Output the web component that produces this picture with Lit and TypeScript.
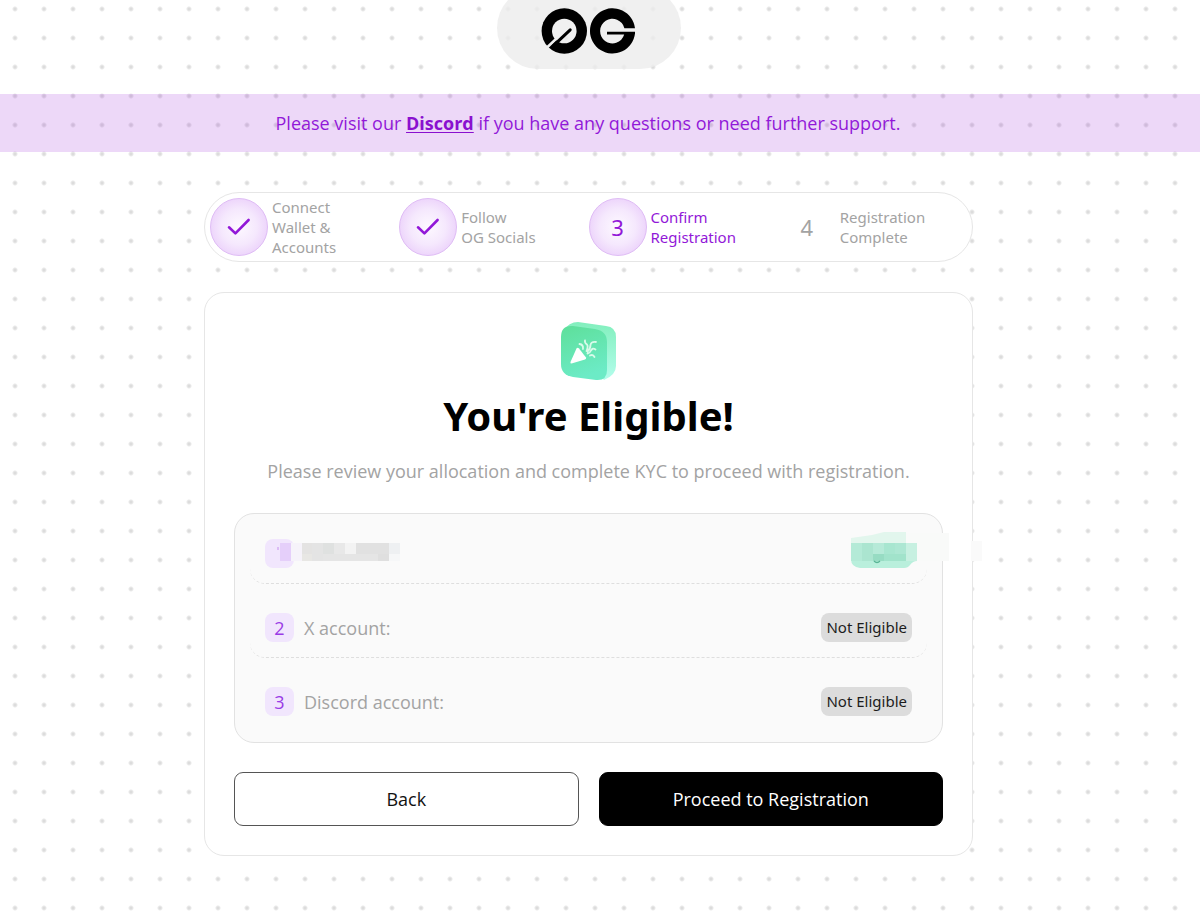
import { LitElement, html, css, svg, nothing } from "lit";
import { customElement, property } from "lit/decorators.js";

interface Step {
  lines: string[];
  state: "done" | "current" | "todo";
}

const STEPS: Step[] = [
  { lines: ["Connect", "Wallet &", "Accounts"], state: "done" },
  { lines: ["Follow", "OG Socials"], state: "done" },
  { lines: ["Confirm", "Registration"], state: "current" },
  { lines: ["Registration", "Complete"], state: "todo" },
];

@customElement("brand-logo")
export class BrandLogo extends LitElement {
  static styles = css`
    :host { display: block; }
    .mark { display: block; width: 96px; height: 46px; }
  `;

  render() {
    return html`
      <svg class="mark" viewBox="1 0 96 46" role="img" aria-label="0G">
        <defs>
          <mask id="zero">
            <rect width="97" height="46" fill="#fff" />
            <circle cx="24.3" cy="23" r="12.3" fill="#000" />
            <path d="M16 31 L3 43.3" stroke="#000" stroke-width="2.6" />
          </mask>
        </defs>
        <circle cx="24.3" cy="23" r="22.7" mask="url(#zero)" />
        <path d="M13.2 37.9 L30.2 21.8" stroke="#000" stroke-width="3" stroke-linecap="round" />
        <path d="M95 20.3 A22.6 22.6 0 1 0 95 25.5 V23.8 H67 V26.6 H84.2 A12.3 12.3 0 1 1 84.4 20.3 Z" />
      </svg>
    `;
  }
}

@customElement("step-track")
export class StepTrack extends LitElement {
  @property({ attribute: false }) steps: Step[] = [];

  static styles = css`
    :host { display: block; }
    .track {
      display: grid;
      grid-template-columns: repeat(4, 1fr);
      box-sizing: border-box;
      min-height: 70px;
      margin: 0;
      padding: 4px 5px;
      list-style: none;
      background: #fff;
      border: 1px solid #e6e6e6;
      border-radius: 35px;
    }
    .step { display: flex; align-items: center; gap: 4px; color: #a3a3a3; }
    .current { color: #9218d8; }
    .disc {
      display: grid;
      place-items: center;
      flex: none;
      box-sizing: border-box;
      width: 58px;
      height: 58px;
      border-radius: 50%;
      font-size: 22px;
    }
    .filled {
      color: #9218d8;
      border: 1px solid #dfbcf5;
      background: radial-gradient(circle, #fdf9ff 0%, #f5e8fd 45%, #edd5fb 72%);
    }
    .label { font-size: 15px; line-height: 20px; }
    .line { display: block; }
    .check { width: 24px; height: 20px; }
  `;

  render() {
    return html`
      <ol class="track">
        ${this.steps.map(
          (s, i) => html`
            <li class="step ${s.state}" aria-current=${s.state === "current" ? "step" : nothing}>
              <span class="disc ${s.state === "todo" ? "" : "filled"}">
                ${s.state === "done"
                  ? html`<svg class="check" viewBox="0 0 24 20" fill="none" aria-label="Done">
                      <path d="M2 10.3 L8.4 16.4 L21.6 3" stroke="#9218d8" stroke-width="2.6" stroke-linecap="round" stroke-linejoin="round" />
                    </svg>`
                  : i + 1}
              </span>
              <span class="label">${s.lines.map((l) => html`<span class="line">${l}</span>`)}</span>
            </li>
          `
        )}
      </ol>
    `;
  }
}

// x, y, width, height, colour of each tile that hides the wallet row's data.
const TILES: [number, number, number, number, string][] = [
  [42, 34, 2, 3, "#dcbcf6"],
  [45, 30, 11, 18, "#e5cffa"],
  [56, 30, 11, 18, "#f6f3fa"],
  [67, 30, 10, 11, "#e4e3e2"],
  [67, 41, 10, 7, "#e8e7e4"],
  [77, 30, 11, 18, "#e4e4e4"],
  [88, 30, 11, 11, "#dfe1e0"],
  [99, 30, 11, 11, "#e8e8e8"],
  [88, 41, 34, 7, "#e5e5e5"],
  [110, 30, 11, 11, "#f3f3f3"],
  [121, 30, 33, 11, "#e1e1e1"],
  [121, 41, 22, 7, "#e5e5e5"],
  [143, 41, 11, 7, "#dfdfdf"],
  [154, 30, 11, 11, "#eef0f2"],
  [154, 41, 11, 7, "#f6f7f8"],
  [671, 20, 44, 28, "#f9faf9"],
  [737, 28, 11, 20, "#fafafa"],
];

const BADGE_TILES: [number, number, number, number, string][] = [
  [617, 30, 11, 18, "#b4ead7"],
  [628, 30, 11, 18, "#abe5d0"],
  [639, 30, 11, 11, "#b6ead8"],
  [650, 30, 11, 11, "#a8e6d0"],
  [661, 30, 11, 11, "#ade7d3"],
  [639, 41, 11, 7, "#97dcc3"],
  [650, 41, 22, 7, "#a1e3cb"],
  [672, 30, 11, 18, "#c7f0e1"],
];

@customElement("allocation-list")
export class AllocationList extends LitElement {
  static styles = css`
    :host { display: block; }
    .list {
      position: relative;
      display: flex;
      flex-direction: column;
      gap: 14px;
      margin: 0;
      padding: 10px 15px;
      list-style: none;
      background: #fafafa;
      border: 1px solid #e2e2e2;
      border-radius: 20px;
    }
    .row {
      display: flex;
      align-items: center;
      gap: 10px;
      box-sizing: border-box;
      min-height: 60px;
      padding: 0 15px;
      border-bottom: 1px dashed #dedede;
      border-radius: 15px;
      color: #a3a3a3;
      font-size: 18px;
    }
    .row:last-of-type { border-bottom-color: transparent; }
    .index {
      display: grid;
      place-items: center;
      flex: none;
      width: 29px;
      height: 29px;
      border-radius: 8px;
      background: #f1e6fd;
      color: #9a3be6;
    }
    .status {
      margin-left: auto;
      padding: 0 5px;
      border-radius: 8px;
      background: #dcdcdc;
      color: #1c1c1c;
      font-family: "Noto Sans", sans-serif;
      font-size: 15px;
      line-height: 29px;
    }
    .veil {
      position: absolute;
      top: 0;
      height: 70px;
      pointer-events: none;
    }
    .left { left: 0; width: 200px; }
    .right { right: -50px; width: 200px; }
  `;

  render() {
    const tile = ([x, y, w, h, c]: [number, number, number, number, string]) =>
      svg`<rect x=${x} y=${y} width=${w} height=${h} fill=${c} />`;
    return html`
      <ul class="list">
        <li class="row">
          <span class="index"></span>
          <svg class="veil left" viewBox="0 1 200 70" shape-rendering="crispEdges" aria-hidden="true">
            ${TILES.filter((t) => t[0] < 200).map(tile)}
          </svg>
          <svg class="veil right" viewBox="558 1 200 70" aria-hidden="true">
            ${TILES.filter((t) => t[0] > 200).map(tile)}
            <path d="M617 30 V25 L638 22 L650 19 H672 V30 Z" fill="#e2f6ed" />
            <path d="M617 30 H683 V48 Q679 48 676 52 Q674 55 670 55 H626 Q617 54 617 46 Z" fill="#b9efdc" />
            <g shape-rendering="crispEdges">${BADGE_TILES.map(tile)}</g>
            <path d="M640 48 Q643 51 646 48" fill="none" stroke="#59b595" stroke-width="1.3" />
          </svg>
        </li>
        <li class="row">
          <span class="index">2</span><span>X account:</span>
          <span class="status">Not Eligible</span>
        </li>
        <li class="row">
          <span class="index">3</span><span>Discord account:</span>
          <span class="status">Not Eligible</span>
        </li>
      </ul>
    `;
  }
}

@customElement("app-root")
export class AppRoot extends LitElement {
  static styles = css`
    :host {
      display: block;
      min-height: 100vh;
      font-family: "Noto Sans", sans-serif;
      color: #000;
      background: #fff radial-gradient(circle at 15px 9px, #dcdcdc 1px, #ebebeb 2px, transparent 3px) 0 0 / 29px 29px;
    }
    .top {
      display: flex;
      justify-content: center;
      overflow: hidden;
      padding-right: 22px;
      margin-bottom: 25px;
    }
    .pill {
      display: grid;
      place-items: center;
      box-sizing: border-box;
      width: 184px;
      height: 82px;
      margin-top: -13px;
      padding-top: 5px;
      border-radius: 41px;
      background: rgba(236, 236, 236, 0.8);
    }
    .notice {
      margin: 0;
      padding: 0 24px 0 0;
      background: rgba(146, 24, 216, 0.17);
      color: #9218d8;
      font-family: "Open Sans", sans-serif;
      font-size: 18px;
      line-height: 58px;
      text-align: center;
    }
    .link { color: #8a10cf; font-weight: 700; text-underline-offset: 2px; }
    .page {
      display: flex;
      flex-direction: column;
      gap: 30px;
      max-width: 769px;
      margin: 0 auto;
      padding: 40px 23px 55px 0;
    }
    .card {
      padding: 29px;
      background: #fff;
      border: 1px solid #e6e6e6;
      border-radius: 20px;
      text-align: center;
      font-family: "Open Sans", sans-serif;
    }
    .party { display: block; width: 60px; height: 62px; margin: 0 auto; }
    .title { margin: 4px 0 0; font-family: "Noto Sans", sans-serif; font-size: 40px; line-height: 56px; font-weight: 700; }
    .lead { margin: 15px 0 30px; font-size: 18px; line-height: 24px; color: #a3a3a3; }
    .list { text-align: left; }
    .actions { display: grid; grid-template-columns: 1fr 1fr; gap: 20px; margin-top: 29px; }
    .btn {
      height: 54px;
      border: 1px solid #555;
      border-radius: 9px;
      background: #fff;
      color: #111;
      font: inherit;
      font-size: 18px;
      cursor: pointer;
    }
    .primary { background: #000; border-color: #000; color: #fff; }
  `;

  render() {
    return html`
      <header class="top"><div class="pill"><brand-logo></brand-logo></div></header>
      <p class="notice">
        Please visit our <a class="link" href="#discord">Discord</a> if you have any questions or need further support.
      </p>
      <main class="page">
        <step-track .steps=${STEPS}></step-track>
        <section class="card">
          <svg class="party" viewBox="0 0 60 62" aria-hidden="true">
            <defs>
              <linearGradient id="face" x1="0" y1="0" x2="0.3" y2="1">
                <stop offset="0" stop-color="#5edf9a" />
                <stop offset="1" stop-color="#6cebc6" />
              </linearGradient>
              <linearGradient id="side" x1="0" y1="0" x2="0" y2="1">
                <stop offset="0" stop-color="#82efbd" />
                <stop offset="1" stop-color="#b4fdec" />
              </linearGradient>
            </defs>
            <path d="M4 9 Q10 0 19 0 L47 4 Q57 5 57 15 V44 Q57 53 45 58 Z" fill="url(#side)" />
            <path d="M14 4 L36 7 Q48 9 48 20 V48 Q48 59 37 58 L14 55 Q2 53 2 42 V15 Q2 3 14 4 Z" fill="url(#face)" />
            <path d="M17.5 26.5 Q18.5 25 20 26.5 L27 35.5 Q27.5 37 26 37.5 L12.5 41.5 Q11 41.5 11.5 40 Z" fill="#fff" />
            <path d="M20.5 22 Q24.5 22.5 24 27 M26 18.5 Q25.5 21 28 22.5 Q29.5 24.5 27.5 29 M37 20 Q32 19.5 31.5 23 Q31.5 27 28.5 29.5 M36.5 27.5 Q33.5 25.5 32 28.5 Q31 31 28.5 31.5 M31 33.5 Q34 32 35.5 35" fill="none" stroke="#d9fbea" stroke-width="1.8" stroke-linecap="round" />
          </svg>
          <h1 class="title">You're Eligible!</h1>
          <p class="lead">Please review your allocation and complete KYC to proceed with registration.</p>
          <allocation-list class="list"></allocation-list>
          <div class="actions">
            <button class="btn" type="button">Back</button>
            <button class="btn primary" type="button">Proceed to Registration</button>
          </div>
        </section>
      </main>
    `;
  }
}
